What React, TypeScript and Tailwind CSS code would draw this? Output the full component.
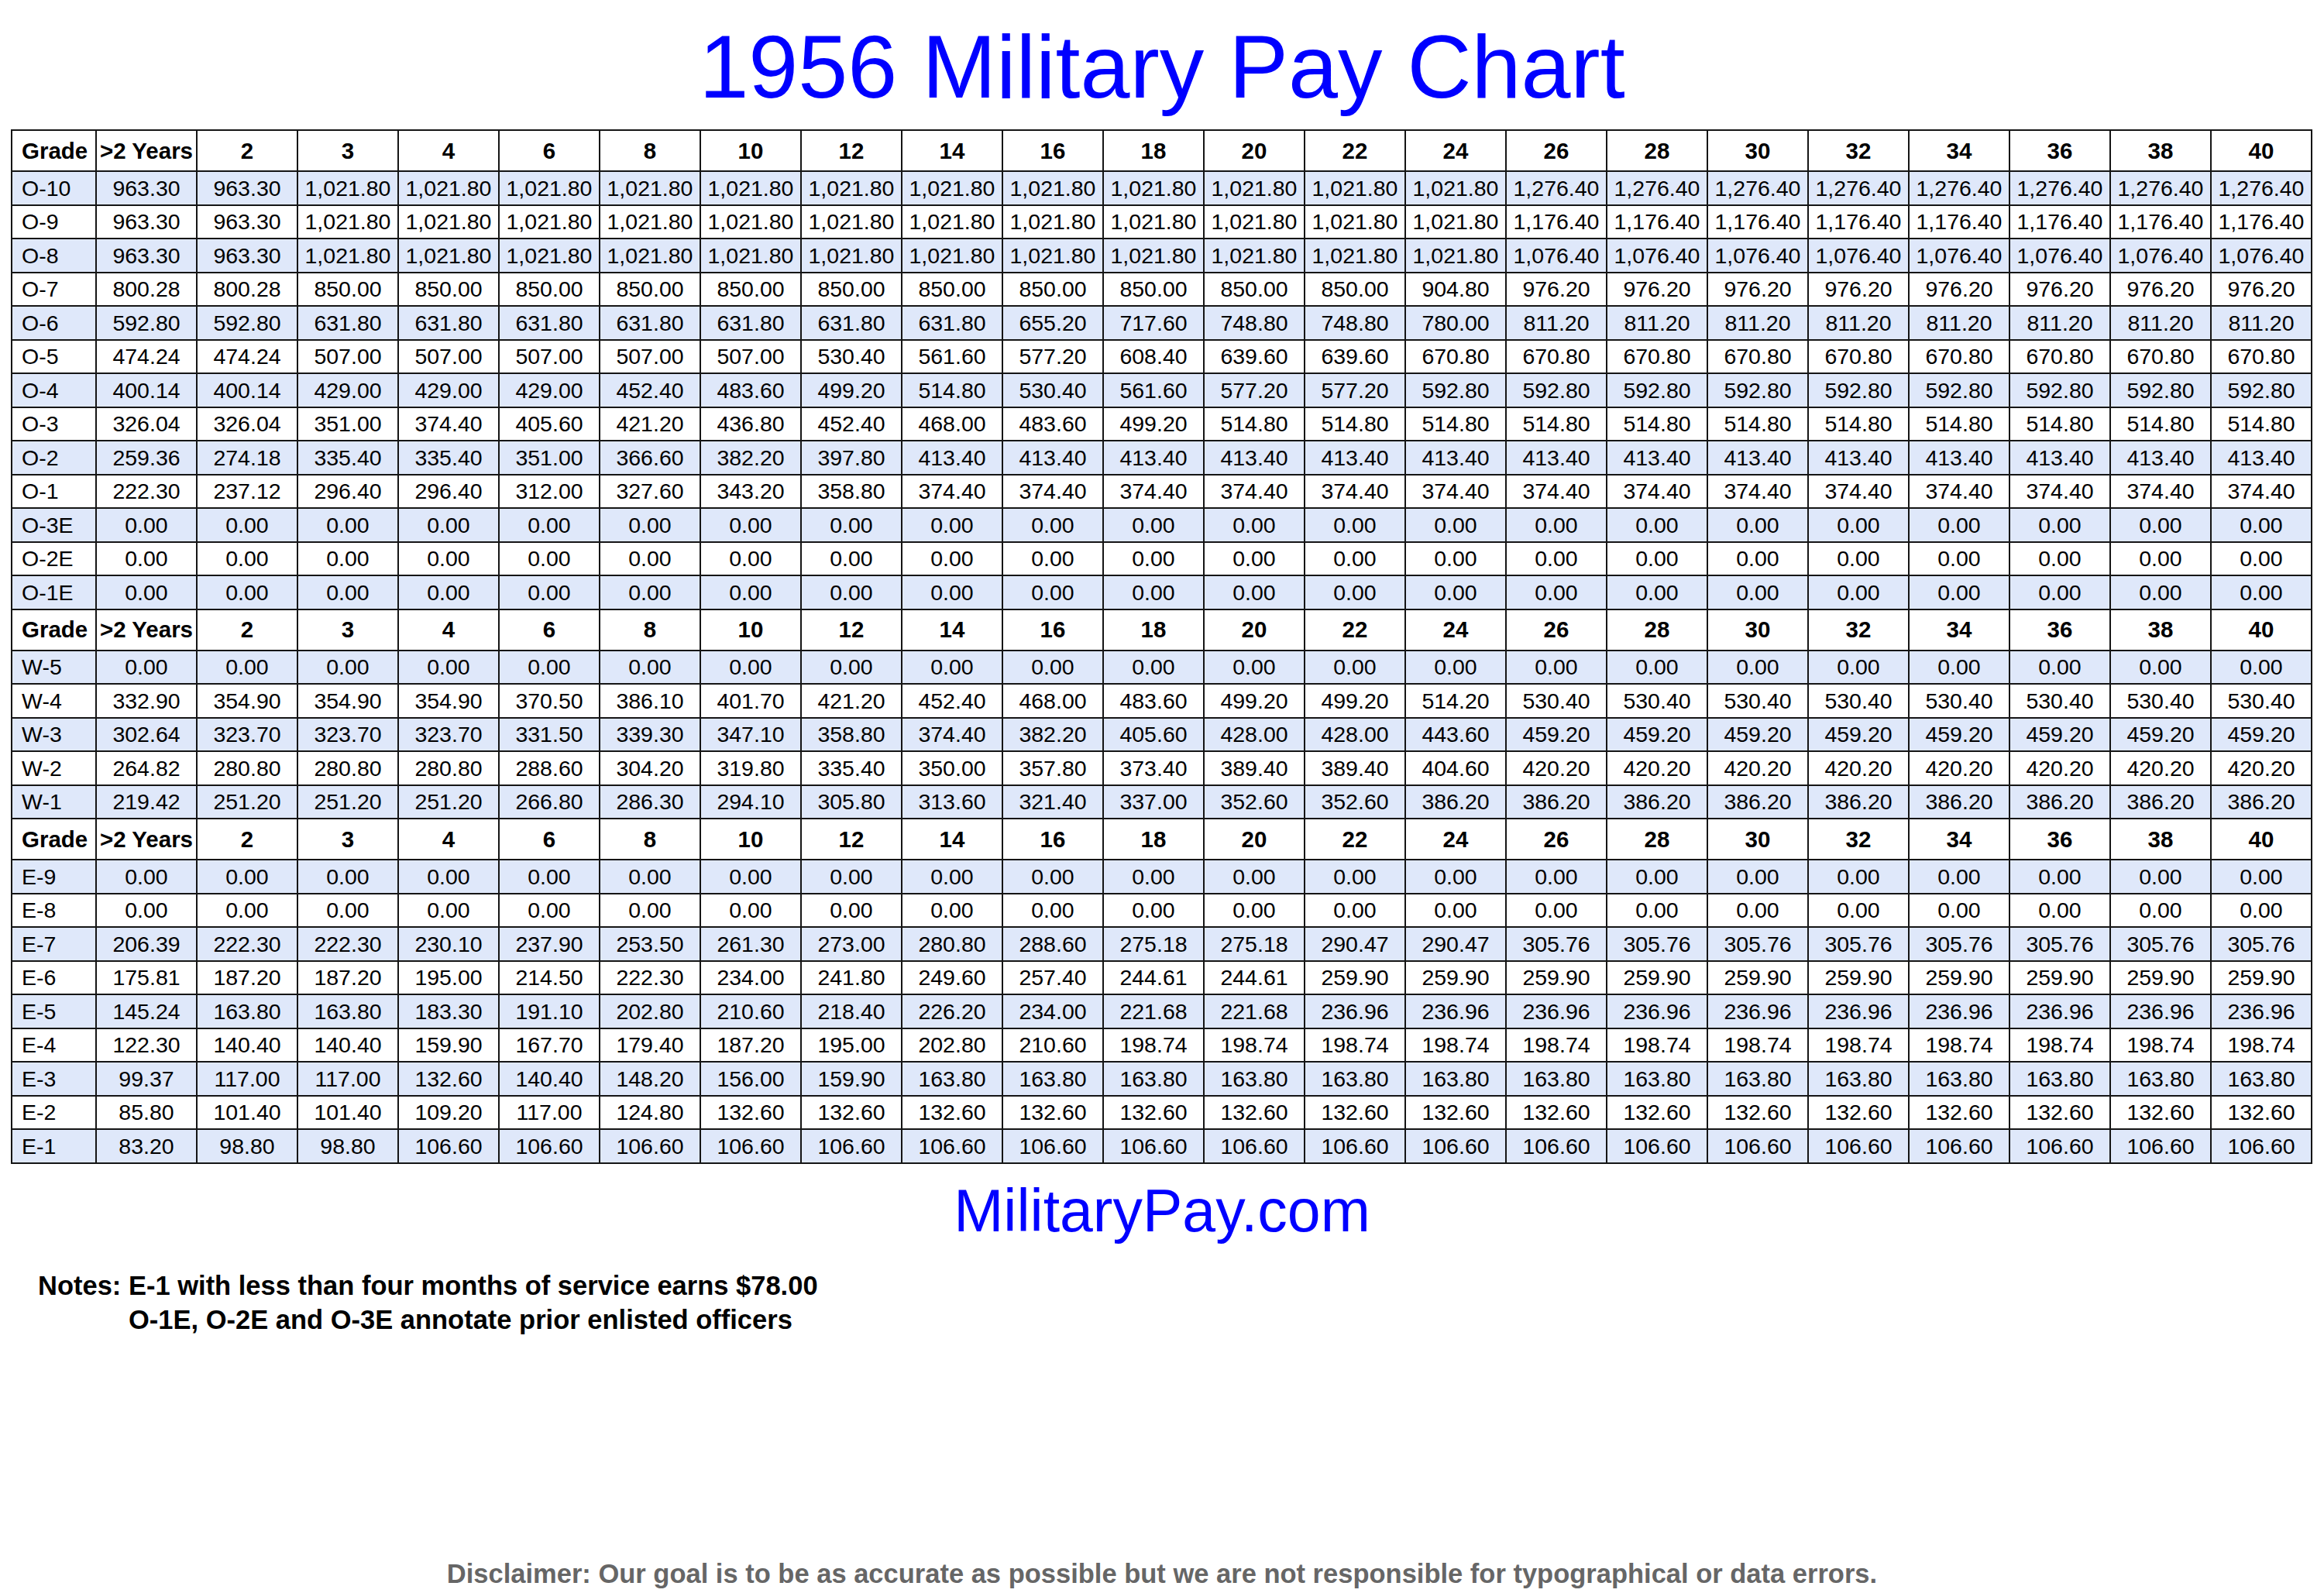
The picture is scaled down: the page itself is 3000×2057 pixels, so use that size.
const COLS = ["2", "3", "4", "6", "8", "10", "12", "14", "16", "18", "20", "22", "24", "26", "28", "30", "32", "34", "36", "38", "40"]

const rep = (v: string, n: number) => Array.from({ length: n }, () => v)
const zeros = rep("0.00", 22)

type Row = { grade: string; pay: string[] }

const officers: Row[] = [
  { grade: "O-10", pay: ["963.30", "963.30", ...rep("1,021.80", 12), ...rep("1,276.40", 8)] },
  { grade: "O-9", pay: ["963.30", "963.30", ...rep("1,021.80", 12), ...rep("1,176.40", 8)] },
  { grade: "O-8", pay: ["963.30", "963.30", ...rep("1,021.80", 12), ...rep("1,076.40", 8)] },
  { grade: "O-7", pay: ["800.28", "800.28", ...rep("850.00", 11), "904.80", ...rep("976.20", 8)] },
  { grade: "O-6", pay: ["592.80", "592.80", ...rep("631.80", 7), "655.20", "717.60", "748.80", "748.80", "780.00", ...rep("811.20", 8)] },
  { grade: "O-5", pay: ["474.24", "474.24", ...rep("507.00", 5), "530.40", "561.60", "577.20", "608.40", "639.60", "639.60", "670.80", ...rep("670.80", 8)] },
  { grade: "O-4", pay: ["400.14", "400.14", "429.00", "429.00", "429.00", "452.40", "483.60", "499.20", "514.80", "530.40", "561.60", "577.20", "577.20", "592.80", ...rep("592.80", 8)] },
  { grade: "O-3", pay: ["326.04", "326.04", "351.00", "374.40", "405.60", "421.20", "436.80", "452.40", "468.00", "483.60", "499.20", "514.80", "514.80", "514.80", ...rep("514.80", 8)] },
  { grade: "O-2", pay: ["259.36", "274.18", "335.40", "335.40", "351.00", "366.60", "382.20", "397.80", ...rep("413.40", 14)] },
  { grade: "O-1", pay: ["222.30", "237.12", "296.40", "296.40", "312.00", "327.60", "343.20", "358.80", ...rep("374.40", 14)] },
  { grade: "O-3E", pay: zeros },
  { grade: "O-2E", pay: zeros },
  { grade: "O-1E", pay: zeros },
]

const warrants: Row[] = [
  { grade: "W-5", pay: zeros },
  { grade: "W-4", pay: ["332.90", "354.90", "354.90", "354.90", "370.50", "386.10", "401.70", "421.20", "452.40", "468.00", "483.60", "499.20", "499.20", "514.20", ...rep("530.40", 8)] },
  { grade: "W-3", pay: ["302.64", "323.70", "323.70", "323.70", "331.50", "339.30", "347.10", "358.80", "374.40", "382.20", "405.60", "428.00", "428.00", "443.60", ...rep("459.20", 8)] },
  { grade: "W-2", pay: ["264.82", "280.80", "280.80", "280.80", "288.60", "304.20", "319.80", "335.40", "350.00", "357.80", "373.40", "389.40", "389.40", "404.60", ...rep("420.20", 8)] },
  { grade: "W-1", pay: ["219.42", "251.20", "251.20", "251.20", "266.80", "286.30", "294.10", "305.80", "313.60", "321.40", "337.00", "352.60", "352.60", "386.20", ...rep("386.20", 8)] },
]

const enlisted: Row[] = [
  { grade: "E-9", pay: zeros },
  { grade: "E-8", pay: zeros },
  { grade: "E-7", pay: ["206.39", "222.30", "222.30", "230.10", "237.90", "253.50", "261.30", "273.00", "280.80", "288.60", "275.18", "275.18", "290.47", "290.47", ...rep("305.76", 8)] },
  { grade: "E-6", pay: ["175.81", "187.20", "187.20", "195.00", "214.50", "222.30", "234.00", "241.80", "249.60", "257.40", "244.61", "244.61", "259.90", "259.90", ...rep("259.90", 8)] },
  { grade: "E-5", pay: ["145.24", "163.80", "163.80", "183.30", "191.10", "202.80", "210.60", "218.40", "226.20", "234.00", "221.68", "221.68", "236.96", "236.96", ...rep("236.96", 8)] },
  { grade: "E-4", pay: ["122.30", "140.40", "140.40", "159.90", "167.70", "179.40", "187.20", "195.00", "202.80", "210.60", "198.74", "198.74", "198.74", "198.74", ...rep("198.74", 8)] },
  { grade: "E-3", pay: ["99.37", "117.00", "117.00", "132.60", "140.40", "148.20", "156.00", "159.90", ...rep("163.80", 14)] },
  { grade: "E-2", pay: ["85.80", "101.40", "101.40", "109.20", "117.00", "124.80", ...rep("132.60", 16)] },
  { grade: "E-1", pay: ["83.20", "98.80", "98.80", ...rep("106.60", 19)] },
]

function HeaderRow() {
  return (
    <tr className="h-[53px] bg-white">
      <th className="border-2 border-[#151515] pl-[12px] text-left font-bold text-[29.5px]">Grade</th>
      <th className="border-2 border-[#151515] px-0 text-center font-bold text-[29.5px] whitespace-nowrap">&gt;2 Years</th>
      {COLS.map((c) => (
        <th key={c} className="border-2 border-[#151515] text-center font-bold text-[29.5px]">
          {c}
        </th>
      ))}
    </tr>
  )
}

function Section({ rows }: { rows: Row[] }) {
  return (
    <>
      <HeaderRow />
      {rows.map((r, i) => (
        <tr key={r.grade} className={i % 2 === 0 ? "h-[43.5px] bg-[#dfe8fa]" : "h-[43.5px] bg-white"}>
          <td className="border-2 border-[#151515] pl-[12px] text-left text-[28.5px] whitespace-nowrap">{r.grade}</td>
          {r.pay.map((p, j) => (
            <td key={j} className="border-2 border-[#151515] p-0 text-center text-[28.5px] whitespace-nowrap">
              {p}
            </td>
          ))}
        </tr>
      ))}
    </>
  )
}

export default function App() {
  return (
    <div className="w-[3000px] h-[2057px] bg-white text-black font-['Liberation_Sans',Arial,sans-serif] overflow-hidden">
      <h1 className="pt-[29px] text-center text-[115px] leading-none text-[#0000ff]">1956 Military Pay Chart</h1>

      <table className="mt-[23px] ml-[14px] w-[2969px] table-fixed border-collapse leading-none">
        <colgroup>
          <col className="w-[109px]" />
          {Array.from({ length: 22 }, (_, i) => (
            <col key={i} className="w-[130px]" />
          ))}
        </colgroup>
        <tbody>
          <Section rows={officers} />
          <Section rows={warrants} />
          <Section rows={enlisted} />
        </tbody>
      </table>

      <div className="mt-[22px] text-center text-[77px] leading-none text-[#0000ff]">MilitaryPay.com</div>

      <div className="mt-[36px] pl-[49px] flex text-[34.5px] leading-[44px] font-bold">
        <span className="whitespace-pre">Notes: </span>
        <div>
          <div>E-1 with less than four months of service earns $78.00</div>
          <div>O-1E, O-2E and O-3E annotate prior enlisted officers</div>
        </div>
      </div>

      <div className="mt-[284px] text-center text-[34.5px] leading-[44px] font-bold text-[#666666]">
        Disclaimer: Our goal is to be as accurate as possible but we are not responsible for typographical or data errors.
      </div>
    </div>
  )
}
